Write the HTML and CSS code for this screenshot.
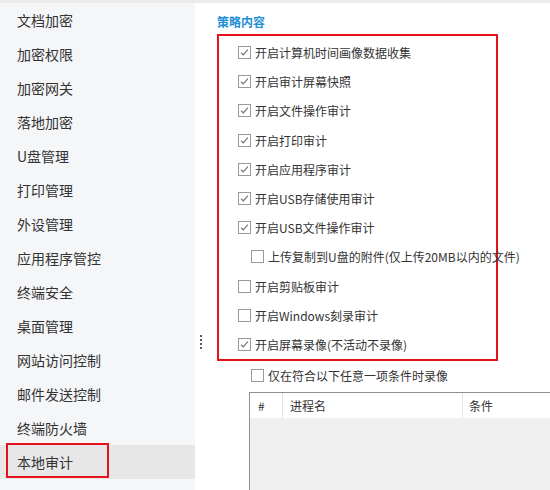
FILE: index.html
```html
<!DOCTYPE html>
<html lang="zh-CN">
<head>
<meta charset="utf-8">
<title>本地审计</title>
<link rel="stylesheet" href="styles.css">
</head>
<body>
<div class="topbar"></div>
<div class="wrap">
  <nav class="sidebar">
    <div class="nav-item">文档加密</div>
    <div class="nav-item">加密权限</div>
    <div class="nav-item">加密网关</div>
    <div class="nav-item">落地加密</div>
    <div class="nav-item">U盘管理</div>
    <div class="nav-item">打印管理</div>
    <div class="nav-item">外设管理</div>
    <div class="nav-item">应用程序管控</div>
    <div class="nav-item">终端安全</div>
    <div class="nav-item">桌面管理</div>
    <div class="nav-item">网站访问控制</div>
    <div class="nav-item">邮件发送控制</div>
    <div class="nav-item">终端防火墙</div>
    <div class="nav-item active">本地审计</div>
  </nav>
  <div class="gutter"><div class="grip"><i></i><i></i><i></i><i></i></div></div>
  <main class="content">
    <div class="heading">策略内容</div>
    <div class="policy-box">
      <label class="opt"><span class="cb"><svg viewBox="0 0 13 13"><polyline points="2.5,6.8 5,9.4 10.5,3.2"/></svg></span>开启计算机时间画像数据收集</label>
      <label class="opt"><span class="cb"><svg viewBox="0 0 13 13"><polyline points="2.5,6.8 5,9.4 10.5,3.2"/></svg></span>开启审计屏幕快照</label>
      <label class="opt"><span class="cb"><svg viewBox="0 0 13 13"><polyline points="2.5,6.8 5,9.4 10.5,3.2"/></svg></span>开启文件操作审计</label>
      <label class="opt"><span class="cb"><svg viewBox="0 0 13 13"><polyline points="2.5,6.8 5,9.4 10.5,3.2"/></svg></span>开启打印审计</label>
      <label class="opt"><span class="cb"><svg viewBox="0 0 13 13"><polyline points="2.5,6.8 5,9.4 10.5,3.2"/></svg></span>开启应用程序审计</label>
      <label class="opt"><span class="cb"><svg viewBox="0 0 13 13"><polyline points="2.5,6.8 5,9.4 10.5,3.2"/></svg></span>开启USB存储使用审计</label>
      <label class="opt"><span class="cb"><svg viewBox="0 0 13 13"><polyline points="2.5,6.8 5,9.4 10.5,3.2"/></svg></span>开启USB文件操作审计</label>
      <label class="opt sub"><span class="cb"></span>上传复制到U盘的附件(仅上传20MB以内的文件)</label>
      <label class="opt"><span class="cb"></span>开启剪贴板审计</label>
      <label class="opt"><span class="cb"></span>开启Windows刻录审计</label>
      <label class="opt"><span class="cb"><svg viewBox="0 0 13 13"><polyline points="2.5,6.8 5,9.4 10.5,3.2"/></svg></span>开启屏幕录像(不活动不录像)</label>
    </div>
    <label class="opt cond"><span class="cb"></span>仅在符合以下任意一项条件时录像</label>
    <div class="grid">
      <div class="grid-head">
        <div class="col c1">#</div>
        <div class="col c2">进程名</div>
        <div class="col c3">条件</div>
      </div>
      <div class="grid-body"></div>
    </div>
  </main>
</div>
</body>
</html>
```
FILE: styles.css
```css
html, body {
  margin: 0;
  padding: 0;
  width: 550px;
  height: 490px;
  overflow: hidden;
  background: #ffffff;
  font-family: "Noto Sans CJK SC", "Noto Sans", sans-serif;
  color: #333333;
}

.topbar {
  height: 3px;
  background: #ececec;
}

.wrap {
  display: flex;
  height: 487px;
}

.sidebar {
  width: 195px;
  flex: none;
  background: #f5f6f8;
}

.nav-item {
  height: 34px;
  line-height: 34px;
  padding-left: 17px;
  font-size: 14px;
  color: #333333;
  white-space: nowrap;
}

.nav-item.active {
  background: #e7e7e8;
  position: relative;
}

.nav-item.active::after {
  content: "";
  position: absolute;
  left: 6px;
  top: -2px;
  width: 99px;
  height: 31px;
  border: 2px solid #e4121f;
}

.gutter {
  width: 22px;
  flex: none;
}

.grip {
  margin-top: 332px;
  margin-left: 5px;
  display: flex;
  flex-direction: column;
  gap: 2px;
}

.grip i {
  display: block;
  width: 2px;
  height: 2px;
  background: #5a5a5a;
}

.content {
  flex: 1;
  padding-top: 9px;
  min-width: 0;
}

.heading {
  height: 20px;
  line-height: 20px;
  font-size: 12px;
  font-weight: 700;
  color: #1e8fd8;
  margin-bottom: 2px;
}

.policy-box {
  width: 277px;
  border: 2px solid #e4121f;
  padding-top: 2px;
}

.opt {
  display: flex;
  align-items: center;
  height: 29.2px;
  padding-left: 19px;
  font-size: 12px;
  color: #333333;
  white-space: nowrap;
}

.opt.sub {
  padding-left: 32px;
}

.opt.cond {
  height: 29px;
  padding-left: 34px;
}

.cb {
  width: 11px;
  height: 11px;
  border: 1px solid #9a9a9a;
  background: #ffffff;
  margin-right: 4px;
  flex: none;
  display: flex;
}

.cb svg {
  width: 11px;
  height: 11px;
}

.cb polyline {
  fill: none;
  stroke: #707070;
  stroke-width: 1.3;
}

.grid {
  margin-top: 2px;
  margin-left: 32px;
  width: 320px;
  border-left: 1px solid #8e8e8e;
  border-top: 1px solid #8e8e8e;
  height: 120px;
  display: flex;
  flex-direction: column;
}

.grid-head {
  display: flex;
  height: 25px;
  background: #ffffff;
  font-size: 12px;
}

.col {
  line-height: 25px;
  white-space: nowrap;
}

.c1 {
  width: 33px;
  padding-left: 8px;
  box-sizing: border-box;
  border-right: 1px solid #e2e2e2;
}

.c2 {
  width: 180px;
  padding-left: 7px;
  box-sizing: border-box;
  border-right: 1px solid #e2e2e2;
}

.c3 {
  padding-left: 6px;
}

.grid-body {
  flex: 1;
  background: #f0f0f0;
}
```
